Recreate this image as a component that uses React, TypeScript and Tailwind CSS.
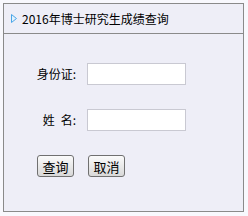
const font = { fontFamily: '"SimSun", "Noto Sans CJK SC", "Liberation Sans", sans-serif' }

function Field({ label }: { label: React.ReactNode }) {
  return (
    <div className="flex h-[22px] items-center">
      <div className="w-[72px] text-right text-[12px] leading-none text-black">{label}</div>
      <input
        type="text"
        className="ml-[11px] h-[22px] w-[99px] border border-[#c9c9d2] bg-white outline-none"
      />
    </div>
  )
}

function Btn({ children }: { children: React.ReactNode }) {
  return (
    <button className="flex h-[22px] w-[37px] items-center justify-center rounded-[3px] border border-[#707070] bg-gradient-to-b from-[#fbfbfb] to-[#d8d8d8] text-[13px] leading-none text-black">
      {children}
    </button>
  )
}

export default function App() {
  return (
    <div className="h-[216px] w-[248px] bg-[#f8f8fd] p-[3px]" style={font}>
      <div className="flex h-[209px] w-[241px] flex-col border border-[#8a8a8a] bg-[#eeeef7]">
        <div className="flex h-[30px] shrink-0 items-center border-b border-[#8a8a8a] pl-[7px]">
          <svg width="6" height="9" viewBox="0 0 6 9" className="mr-[5px]">
            <path d="M0.5 0.5 L5.5 4.5 L0.5 8.5 Z" fill="#e4f2fc" stroke="#4aa6e8" strokeWidth="1" />
          </svg>
          <span className="text-[12px] leading-none text-black">2016年博士研究生成绩查询</span>
        </div>
        <div className="flex flex-col gap-[24px] pt-[29px]">
          <Field label="身份证:" />
          <Field
            label={
              <>
                姓<span className="inline-block w-[6px]" />名:
              </>
            }
          />
          <div className="flex gap-[14px] pl-[33px]">
            <Btn>查询</Btn>
            <Btn>取消</Btn>
          </div>
        </div>
      </div>
    </div>
  )
}
